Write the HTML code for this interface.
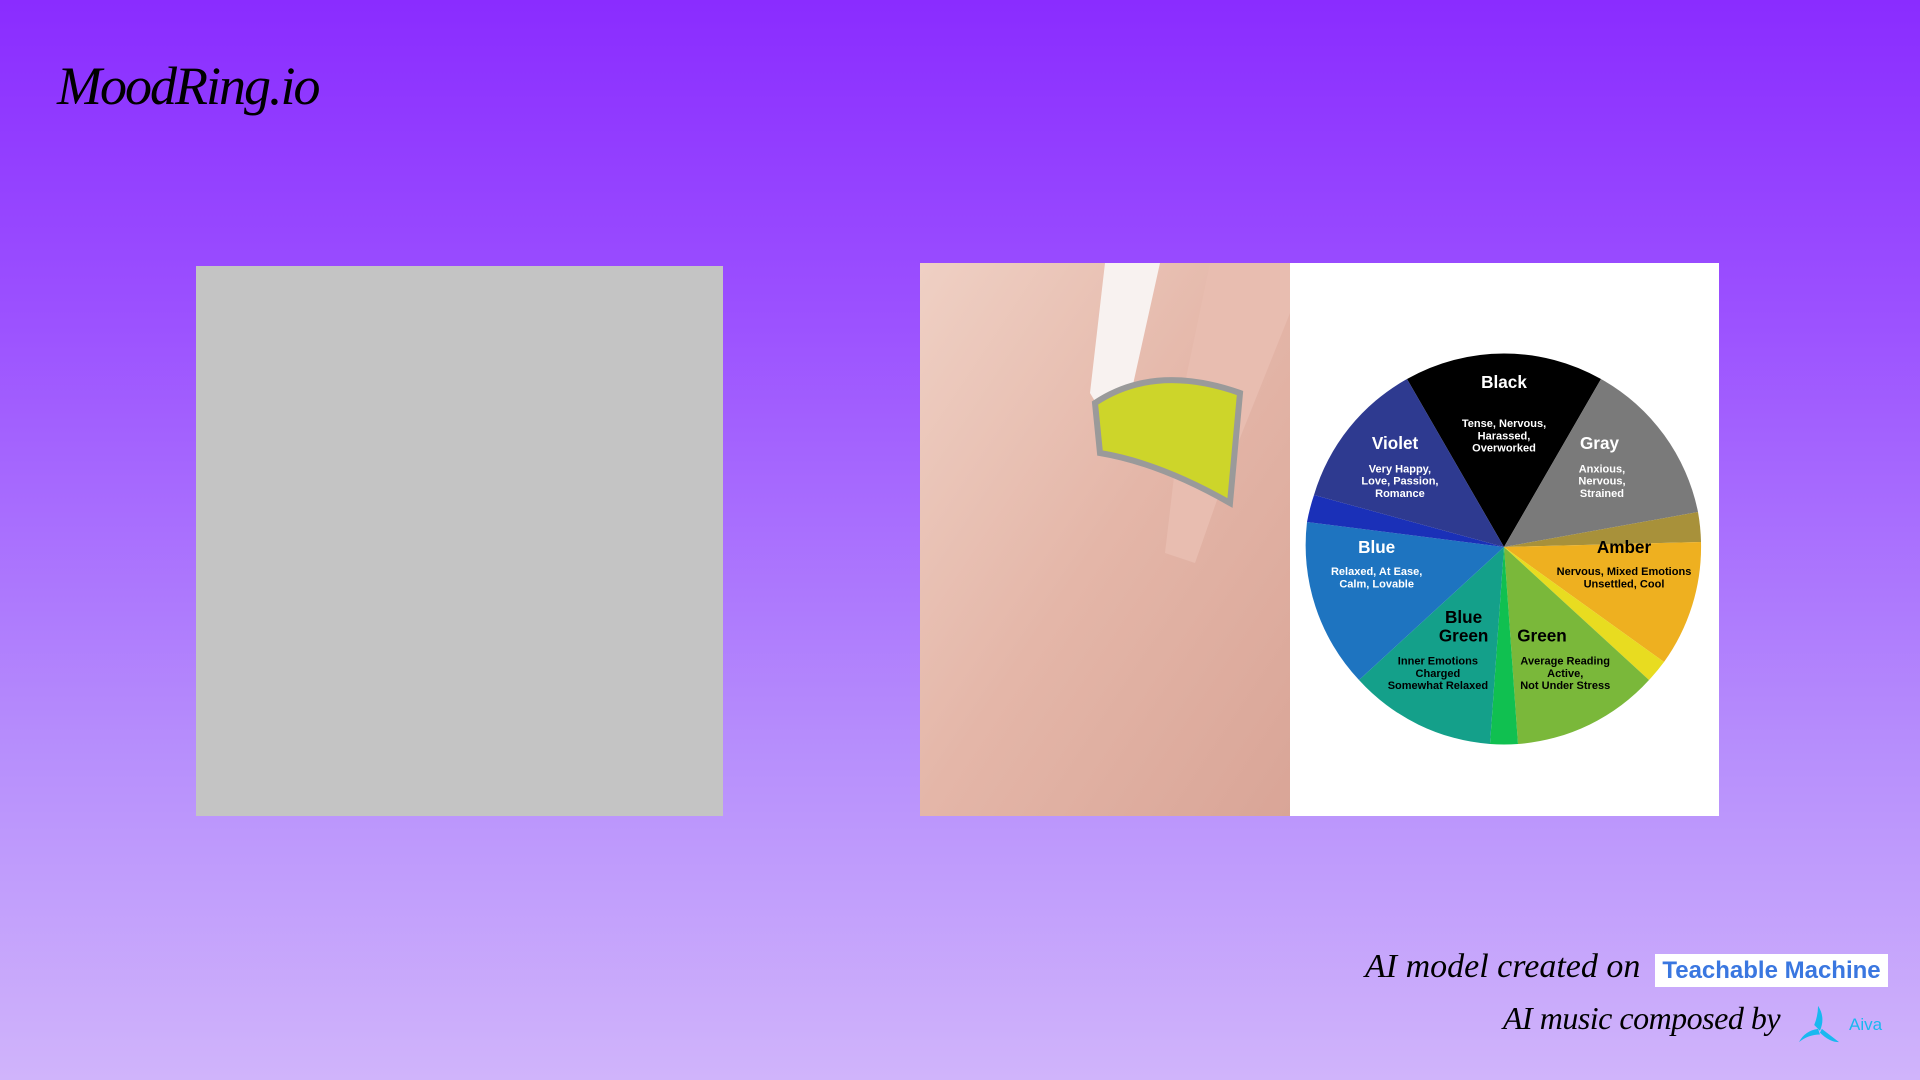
<!DOCTYPE html>
<html><head><meta charset="utf-8"><style>
body{margin:0;width:1920px;height:1080px;overflow:hidden;background:linear-gradient(#8a2cff 0%,#9c52ff 30%,#b78ffc 70%,#d0b4fb 100%);font-family:"Liberation Sans",sans-serif;position:relative}
.hand{font-family:"Liberation Serif",serif;font-style:italic;color:#000;position:absolute;white-space:nowrap}
#gray{position:absolute;left:196px;top:266px;width:527px;height:550px;background:#c4c4c4}
#img{position:absolute;left:920px;top:263px;width:799px;height:553px;background:#fff;overflow:hidden}
#tm{position:absolute;left:1655px;top:954px;width:233px;height:33px;background:#fff;color:#3a77e0;font-weight:bold;font-size:24px;line-height:33px;text-align:center}
</style></head><body>
<div class="hand" style="left:57px;top:55px;font-size:54px;letter-spacing:-2px">MoodRing.io</div>
<div id="gray"></div>
<div id="img">
<svg width="799" height="553" viewBox="0 0 799 553">
<defs><linearGradient id="sk" x1="0" y1="0" x2="1" y2="1"><stop offset="0" stop-color="#efd0c4"/><stop offset="0.5" stop-color="#e4b6a8"/><stop offset="1" stop-color="#d9a597"/></linearGradient></defs>
<rect x="0" y="0" width="370" height="553" fill="#f8f2f0"/>
<path d="M0 0 L185 0 L170 130 L200 180 L240 0 L370 0 L370 553 L0 553 Z" fill="url(#sk)"/>
<path d="M290 0 L370 0 L370 50 L310 200 L275 300 L245 290 L265 120 Z" fill="#e8bdb0"/>
<path d="M175 140 Q235 100 320 130 L310 240 Q240 200 180 190 Z" fill="#cdd52a" stroke="#9a9a9a" stroke-width="6"/>
<g transform="translate(584,284)">
<path d="M0 0 L-97 -168 A197 197 0 0 1 97 -168 Z" fill="#000"/>
<path d="M0 0 L97 -168 A197 197 0 0 1 194 -35 Z" fill="#7a7a7a"/>
<path d="M0 0 L194 -35 A197 197 0 0 1 197 -5 Z" fill="#a8913a"/>
<path d="M0 0 L197 -5 A197 197 0 0 1 160 115 Z" fill="#eeb020"/>
<path d="M0 0 L160 115 A197 197 0 0 1 145 133 Z" fill="#e8dc20"/>
<path d="M0 0 L145 133 A197 197 0 0 1 14 197 Z" fill="#7ab83a"/>
<path d="M0 0 L14 197 A197 197 0 0 1 -14 197 Z" fill="#10c050"/>
<path d="M0 0 L-14 197 A197 197 0 0 1 -145 133 Z" fill="#14a08a"/>
<path d="M0 0 L-145 133 A197 197 0 0 1 -197 -25 Z" fill="#1e74c0"/>
<path d="M0 0 L-197 -25 A197 197 0 0 1 -190 -52 Z" fill="#1a30b8"/>
<path d="M0 0 L-190 -52 A197 197 0 0 1 -97 -168 Z" fill="#2e3a90"/>
<g font-family="Liberation Sans" font-weight="bold" fill="#fff" text-anchor="middle" transform="scale(1.2245)">
<text x="0" y="-130" font-size="14">Black</text>
<text x="0" y="-98" font-size="9">Tense, Nervous,</text><text x="0" y="-88" font-size="9">Harassed,</text><text x="0" y="-78" font-size="9">Overworked</text>
<text x="-89" y="-80" font-size="14">Violet</text>
<text x="-85" y="-61" font-size="9">Very Happy,</text><text x="-85" y="-51" font-size="9">Love, Passion,</text><text x="-85" y="-41" font-size="9">Romance</text>
<text x="78" y="-80" font-size="14">Gray</text>
<text x="80" y="-61" font-size="9">Anxious,</text><text x="80" y="-51" font-size="9">Nervous,</text><text x="80" y="-41" font-size="9">Strained</text>
<text x="-104" y="5" font-size="14">Blue</text>
<text x="-104" y="23" font-size="9">Relaxed, At Ease,</text><text x="-104" y="33" font-size="9">Calm, Lovable</text>
<text x="-33" y="62" font-size="14" fill="#000">Blue</text><text x="-33" y="77" font-size="14" fill="#000">Green</text>
<text x="-54" y="96" font-size="9" fill="#000">Inner Emotions</text><text x="-54" y="106" font-size="9" fill="#000">Charged</text><text x="-54" y="116" font-size="9" fill="#000">Somewhat Relaxed</text>
<text x="31" y="77" font-size="14" fill="#000">Green</text>
<text x="50" y="96" font-size="9" fill="#000">Average Reading</text><text x="50" y="106" font-size="9" fill="#000">Active,</text><text x="50" y="116" font-size="9" fill="#000">Not Under Stress</text>
<text x="98" y="5" font-size="14" fill="#000">Amber</text>
<text x="98" y="23" font-size="9" fill="#000">Nervous, Mixed Emotions</text><text x="98" y="33" font-size="9" fill="#000">Unsettled, Cool</text>
</g></g></svg></div>
<div class="hand" style="left:1365px;top:948px;font-size:34px">AI model created on</div>
<div id="tm">Teachable Machine</div>
<div class="hand" style="left:1503px;top:1000px;font-size:32px;letter-spacing:-0.5px">AI music composed by</div>
<svg style="position:absolute;left:1796px;top:1004px" width="46" height="42" viewBox="0 0 46 44">
<path d="M22 2 Q30 14 24 28 L18 22 Q22 12 22 2Z" fill="#19b8f0"/>
<path d="M2 40 Q8 28 22 26 L24 32 Q12 32 2 40Z" fill="#19b8f0"/>
<path d="M24 30 Q34 40 44 40 L26 26Z" fill="#19b8f0"/>
</svg>
<div style="position:absolute;left:1849px;top:1015px;font-size:17px;color:#19b8f0">Aiva</div>
</body></html>
